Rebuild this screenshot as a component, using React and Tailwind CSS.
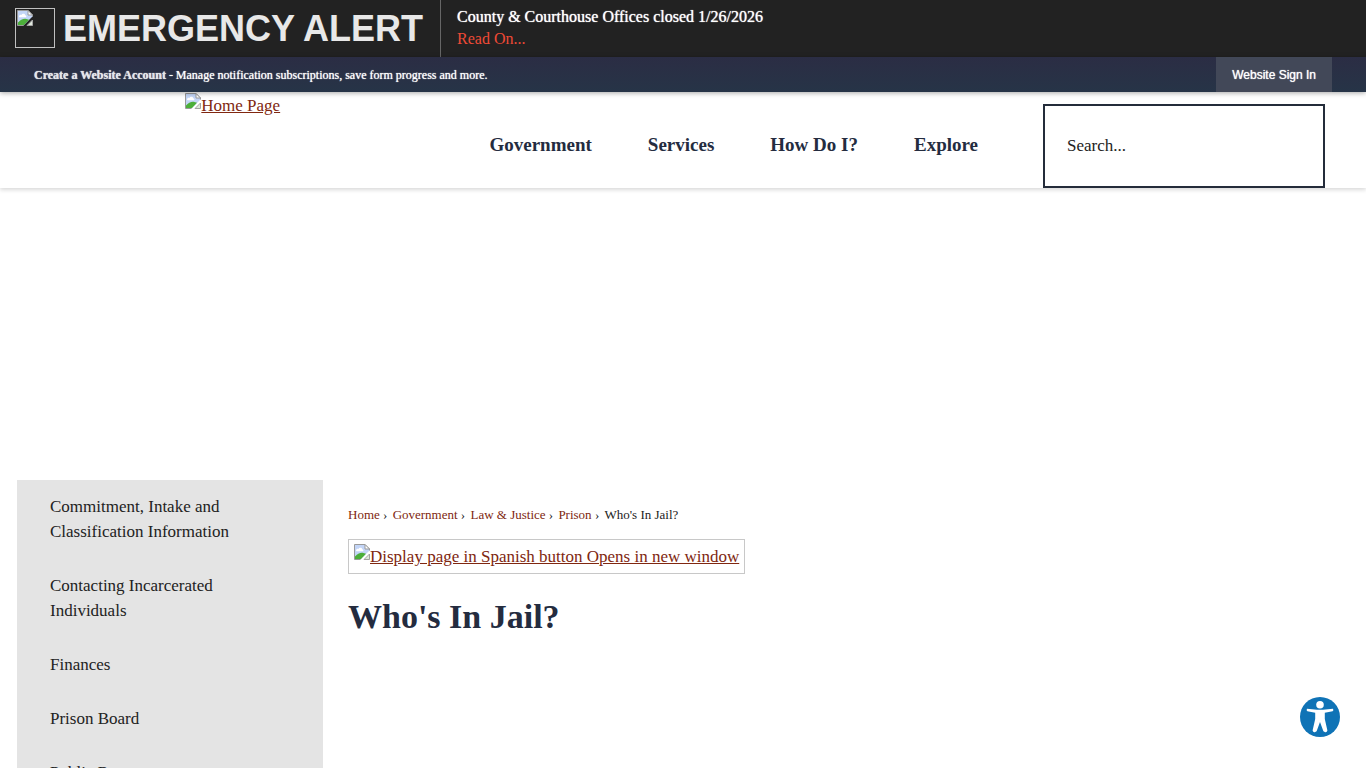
import React from "react";

const navItems = ["Government", "Services", "How Do I?", "Explore"];

const sideLinks = [
  "Commitment, Intake and Classification Information",
  "Contacting Incarcerated Individuals",
  "Finances",
  "Prison Board",
  "Public Resources",
];

const crumbs = ["Home", "Government", "Law & Justice", "Prison"];

// page icon with a torn corner, shown in place of images
const MissingImage = ({ className = "" }) => (
  <svg className={`h-4 w-4 shrink-0 ${className}`} viewBox="0 0 16 16" aria-hidden="true">
    <path d="M0.5 0.5H11L15.5 5V6.5L6.5 15.5H0.5Z" fill="#c3d5f7" />
    <path d="M2 6.8C2 5.2 3.5 4.6 4.5 4.9C5.2 3.2 8 3.4 8.2 5.2C9.4 5.2 9.8 6.6 9 7.2H2.5Z" fill="#fff" />
    <path d="M1 15V12.5C3 10 6 8.6 8.5 8.8L12 9.8L7 15Z" fill="#4caf3a" />
    <path d="M0.5 15.5V0.5H11L15.5 5V6.5M0.5 15.5H6.5" fill="none" stroke="#9a9a9a" />
    <path d="M11 0.5V5H15.5Z" fill="#fff" stroke="#9a9a9a" />
    <path d="M15.5 10V15.5H10Z" fill="#dfe8dc" stroke="#a4a4a4" />
  </svg>
);

const AlertBar = () => (
  <section className="flex h-[57px] bg-[#222]">
    <div className="flex items-start gap-2 border-r border-[#666] pt-2 pr-[17px] pl-[15px]">
      <span className="flex h-10 w-10 border border-[#c0c0c0] p-px">
        <MissingImage />
      </span>
      <h2 className="font-['Liberation_Sans',Arial,sans-serif] text-[36px] leading-[42px] font-bold text-[#e8e8e8]">
        EMERGENCY ALERT
      </h2>
    </div>
    <div className="pt-1.5 pl-4 text-base leading-[22px]">
      <p className="text-white [text-shadow:0_0_1px_#fff]">County &amp; Courthouse Offices closed 1/26/2026</p>
      <a href="#alert" className="text-[#f04a36]">Read On...</a>
    </div>
  </section>
);

const AccountBar = () => (
  <div className="relative flex h-[35px] items-center justify-between bg-linear-to-b from-[#2b2d44] to-[#263447] px-[34px] text-xs text-white shadow-[0_1px_5px_rgba(0,0,0,0.35)]">
    <p className="[text-shadow:0_0_1px_#fff]">
      <a href="#account" className="font-bold text-[#e4e6ea]">Create a Website Account</a>
      {" - Manage notification subscriptions, save form progress and more."}
    </p>
    <button className="h-full bg-[#424858] px-4 font-['Liberation_Sans',Arial,sans-serif] [text-shadow:0_0_1px_#fff]">
      Website Sign In
    </button>
  </div>
);

const Header = () => (
  <header className="flex h-24 items-start bg-white pr-[41px] shadow-[0_2px_4px_rgba(0,0,0,0.15)]">
    <div className="flex flex-1 justify-center">
      <a href="#home" className="flex text-[#802710] underline">
        <MissingImage className="mt-px" />
        <span className="leading-7">Home Page</span>
      </a>
    </div>
    <nav className="flex gap-14 pt-10 pr-[65px] pl-6 text-[19px] leading-[26px] font-bold text-[#242c3f]">
      {navItems.map((item) => (
        <a key={item} href="#nav">{item}</a>
      ))}
    </nav>
    <input
      type="text"
      aria-label="Search"
      placeholder="Search..."
      className="mt-3 h-[84px] w-[282px] border-2 border-[#242c3a] bg-white px-[22px] text-[17px] text-[#222] placeholder:text-[#222]"
    />
  </header>
);

const Sidebar = () => (
  <aside className="w-[306px] shrink-0 bg-[#e4e4e4]">
    <ul>
      {sideLinks.map((label) => (
        <li key={label}>
          <a href="#section" className="block pt-[14px] pr-[68px] pb-[15px] pl-[33px] leading-[25px] text-[#222]">
            {label}
          </a>
        </li>
      ))}
    </ul>
  </aside>
);

const Breadcrumbs = () => (
  <nav aria-label="Breadcrumb" className="text-[13px] leading-5 text-[#222]">
    {crumbs.map((crumb) => (
      <span key={crumb} className="mr-0.5">
        <a href="#crumb" className="text-[#802710]">{crumb}</a>
        {" › "}
      </span>
    ))}
    <span>Who's In Jail?</span>
  </nav>
);

const AccessibilityButton = () => (
  <button aria-label="Accessibility options" className="fixed right-[26px] bottom-[31px] h-10 w-10">
    <svg viewBox="0 0 40 40" className="h-10 w-10">
      <circle cx="20" cy="20" r="20" fill="#0f73b6" />
      <circle cx="20" cy="7.8" r="3.8" fill="#fff" />
      <path
        d="M7 11.8Q6 13.4 7.4 14.2L15.2 15.8V22L12.6 33.6Q13 35.4 14.8 35.2L16.6 34.2L20 25L23.4 34.2L25.2 35.2Q27 35.4 27.4 33.6L24.8 22V15.8L32.6 14.2Q34 13.4 33 11.8L23 12.8H17Z"
        fill="#fff"
      />
    </svg>
  </button>
);

const App = () => (
  <div className="h-screen overflow-hidden bg-white font-['Liberation_Serif','Times_New_Roman',serif] text-[17px]">
    <AlertBar />
    <AccountBar />
    <Header />
    <div className="mt-[292px] flex gap-[25px] px-[17px]">
      <Sidebar />
      <main className="flex-1 pt-[25px]">
        <Breadcrumbs />
        <a
          href="#spanish"
          className="mt-[14px] inline-flex border border-[#c8c8c8] px-[5px] py-1 text-[#802710] underline"
        >
          <MissingImage />
          <span className="leading-[25px]">Display page in Spanish button Opens in new window</span>
        </a>
        <h1 className="mt-[21px] text-[34px] leading-[44px] font-bold text-[#242c3f]">Who's In Jail?</h1>
      </main>
    </div>
    <AccessibilityButton />
  </div>
);

export default App;
